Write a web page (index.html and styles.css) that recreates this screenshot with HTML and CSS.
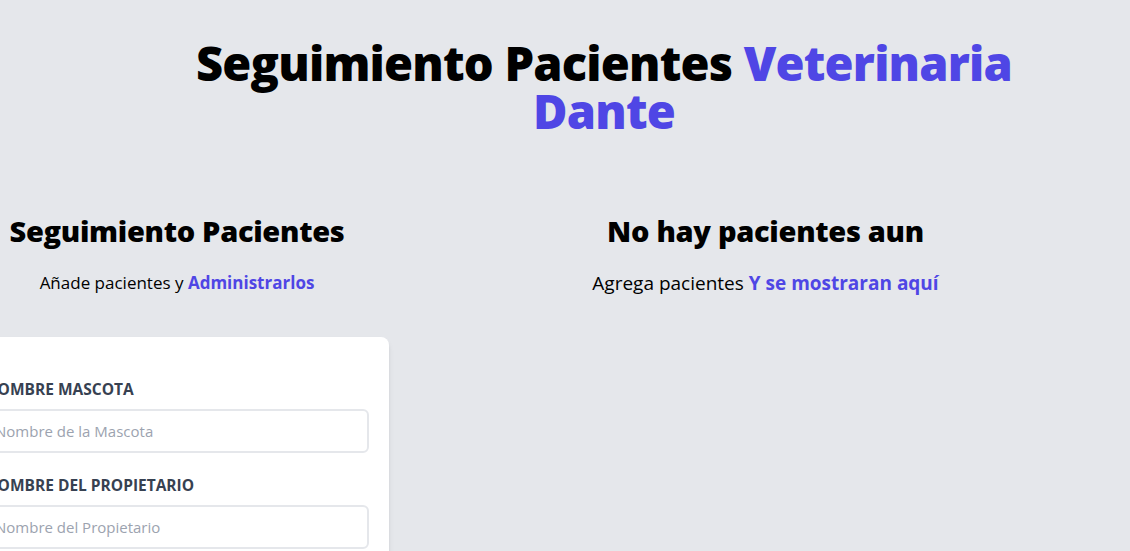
FILE: index.html
```html
<!DOCTYPE html>
<html lang="es">
<head>
<meta charset="utf-8">
<title>Seguimiento Pacientes Veterinaria Dante</title>
<link rel="stylesheet" href="styles.css">
</head>
<body>
<div class="page">
  <header class="header">
    <h1 class="title">Seguimiento Pacientes <span class="accent">Veterinaria Dante</span></h1>
  </header>
  <main class="main">
    <section class="form-col">
      <h2 class="heading">Seguimiento Pacientes</h2>
      <p class="lead lead-sm">Añade pacientes y <span class="accent-bold">Administrarlos</span></p>
      <form class="card">
        <div class="field">
          <label class="label" for="mascota">Nombre Mascota</label>
          <input class="input" id="mascota" type="text" placeholder="Nombre de la Mascota">
        </div>
        <div class="field">
          <label class="label" for="propietario">Nombre del Propietario</label>
          <input class="input" id="propietario" type="text" placeholder="Nombre del Propietario">
        </div>
        <div class="field">
          <label class="label" for="email">Email</label>
          <input class="input" id="email" type="email" placeholder="Email Contacto Propietario">
        </div>
      </form>
    </section>
    <section class="list-col">
      <h2 class="heading">No hay pacientes aun</h2>
      <p class="lead lead-lg">Agrega pacientes <span class="accent-bold">Y se mostraran aquí</span></p>
    </section>
  </main>
</div>
</body>
</html>
```

FILE: styles.css
```css
html, body {
  margin: 0;
  padding: 0;
  overflow: hidden;
}

body {
  background: #e5e7eb;
  color: #000;
  font-family: "Open Sans", "Noto Sans", Arial, sans-serif;
  height: 551px;
}

.page {
  width: 1318px;
  margin-left: -55px;
  padding-top: 39px;
}

.header {
  display: flex;
  justify-content: center;
}

.title {
  margin: 0;
  width: 850px;
  font-family: "Open Sans", sans-serif;
  font-weight: 800;
  font-size: 47px;
  letter-spacing: -0.8px;
  line-height: 48px;
  text-align: center;
}

.accent {
  color: #4f46e5;
}

.main {
  display: flex;
  margin-top: 78px;
}

.form-col {
  flex: none;
  width: 424px;
  margin: 0 20px;
}

.list-col {
  flex: none;
  width: 713px;
}

.heading {
  margin: 0;
  font-family: "Open Sans", sans-serif;
  font-weight: 800;
  font-size: 29px;
  letter-spacing: -0.3px;
  line-height: 36px;
  text-align: center;
}

.lead {
  margin: 20px 0 40px;
  line-height: 28px;
  text-align: center;
}

.lead-sm {
  font-size: 17px;
}

.lead-lg {
  font-size: 19px;
}

.accent-bold {
  color: #4f46e5;
  font-weight: 700;
}

.card {
  background: #fff;
  border-radius: 8px;
  box-shadow: 0 4px 6px -1px rgba(0,0,0,0.1), 0 2px 4px -2px rgba(0,0,0,0.1);
  padding: 40px 20px;
}

.field {
  margin-bottom: 20px;
}

.label {
  display: block;
  color: #374151;
  font-size: 15.5px;
  line-height: 24px;
  font-weight: 700;
  text-transform: uppercase;
}

.input {
  display: block;
  box-sizing: border-box;
  width: 100%;
  margin-top: 8px;
  padding: 8px;
  height: 44px;
  border: 2px solid #e5e7eb;
  border-radius: 6px;
  font-family: inherit;
  font-size: 15px;
  line-height: 24px;
  background: #fff;
  outline: none;
}

.input::placeholder {
  color: #9ca3af;
}
```
